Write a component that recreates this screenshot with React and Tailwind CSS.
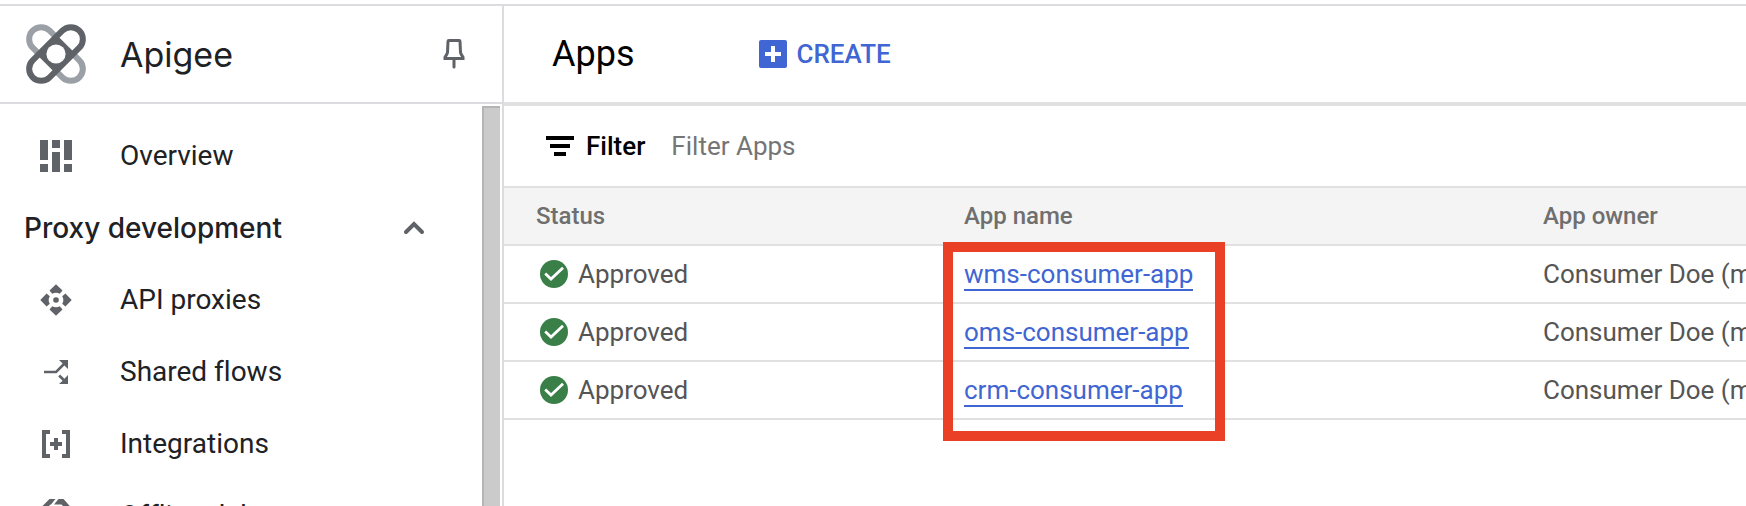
import React from "react";

function ApigeeLogo() {
  return (
    <svg className="size-[60px] shrink-0" viewBox="-30 -30 60 60" fill="none" aria-hidden="true">
      <rect x="-33" y="-12" width="66" height="24" rx="12" transform="rotate(45)" stroke="#9aa0a6" strokeWidth="6" />
      <g transform="rotate(-45)">
        <rect x="-33" y="-12" width="66" height="24" rx="12" fill="#fff" stroke="#5f6368" strokeWidth="6" />
        <rect x="-14" y="-14" width="28" height="28" fill="#5f6368" />
      </g>
      <circle r="9.6" fill="#fff" />
    </svg>
  );
}

function PinIcon() {
  return (
    <svg className="h-8 w-6" viewBox="0 0 24 32" fill="none" stroke="#5f6368" strokeWidth="3" aria-hidden="true">
      <path d="M6 3.2Q6 2.5 7 2.5H17Q18 2.5 18 3.2L18.5 14.5Q18.7 16 21 19.2V20.5H3V19.2Q5.3 16 5.5 14.5Z" />
      <path d="M12 21V29" strokeLinecap="round" />
    </svg>
  );
}

const icons = {
  overview: (
    <path d="M0 0h8v20H0zM0 24h8v8H0zM12 0h8v8h-8zM12 12h8v20h-8zM24 0h8v20h-8zM24 24h8v8h-8z" />
  ),
  proxies: (
    <>
      <path d="M16 .3 22.5 6.6 19.8 9.8A7.3 7.3 0 0 0 12.2 9.8L9.5 6.6Z" />
      <path d="M31.7 16 25.4 22.5 22.2 19.8A7.3 7.3 0 0 0 22.2 12.2L25.4 9.5Z" />
      <path d="M16 31.7 9.5 25.4 12.2 22.2A7.3 7.3 0 0 0 19.8 22.2L22.5 25.4Z" />
      <path d="M.3 16 6.6 9.5 9.8 12.2A7.3 7.3 0 0 0 9.8 19.8L6.6 22.5Z" />
      <circle cx="16" cy="16" r="2.8" />
    </>
  ),
  flows: (
    <>
      <path d="M4 14.7H15.5L22.6 7.6 19 4H28V13L24.4 9.4 16.6 17.3H4Z" />
      <path d="M18.2 20.5 20.1 18.6 24.4 22.8 28 19V28H19L22.6 24.7Z" />
    </>
  ),
  integrations: (
    <path d="M2 2h8v4H6v20h4v4H2zM30 2h-8v4h4v20h-4v4h8zM14 10h4v4h4v4h-4v4h-4v-4h-4v-4h4z" />
  ),
  offline: (
    <path d="M9.5 -1H15.5L11 4.5H10.5L4.5 10.5V14H0V8.5ZM18.5 -1H23.5L32 8.5V14H27.5V10.5L21.5 4.5H14ZM0 18H4.5V21.5L10.5 27.5H21.5L27.5 21.5V18H32V22.5L22.5 32H9.5L0 22.5Z" />
  ),
};

function NavItem({ icon, children }) {
  return (
    <a href="#" className="flex h-[72px] items-center gap-12 pl-10">
      <svg className="size-8 shrink-0 overflow-visible fill-[#5f6368]" viewBox="0 0 32 32" aria-hidden="true">
        {icons[icon]}
      </svg>
      {children}
    </a>
  );
}

function Sidebar() {
  return (
    <aside className="flex w-[504px] shrink-0 flex-col border-r-2 border-[#dadce0] text-[#202124]">
      <div className="flex h-[98px] shrink-0 items-center border-b-2 border-[#dadce0] pl-[26px] pr-9">
        <ApigeeLogo />
        <h1 className="ml-[34px] flex-1 font-[Inter,sans-serif] text-[34px]">Apigee</h1>
        <button type="button" aria-label="Pin menu">
          <PinIcon />
        </button>
      </div>
      <div className="flex min-h-0 flex-1 pr-0.5">
        <nav className="min-w-0 flex-1 pt-4 text-[28px] [font-variant-ligatures:none]">
          <NavItem icon="overview">Overview</NavItem>
          <button type="button" aria-expanded="true" className="flex h-[72px] w-full items-center justify-between pl-6 pr-14 font-[Inter,sans-serif] text-[28px] font-medium">
            Proxy development
            <svg className="h-4 w-6" viewBox="0 0 24 16" fill="none" stroke="#5f6368" strokeWidth="4" strokeLinecap="round" aria-hidden="true">
              <path d="M4 12 12 4 20 12" />
            </svg>
          </button>
          <NavItem icon="proxies">API proxies</NavItem>
          <NavItem icon="flows">Shared flows</NavItem>
          <NavItem icon="integrations">Integrations</NavItem>
          <NavItem icon="offline">Offline debug</NavItem>
        </nav>
        <div className="mt-0.5 w-[18px] border-l-2 border-t-2 border-[#b5b5b5] bg-[#cbcbcb]" />
      </div>
    </aside>
  );
}

function CheckIcon() {
  return (
    <svg className="size-7 shrink-0" viewBox="0 0 28 28" fill="none" aria-hidden="true">
      <circle cx="14" cy="14" r="14" fill="#3a7e48" />
      <path d="M5.2 13.4 11 19 23 7.8" stroke="#fff" strokeWidth="2.8" />
    </svg>
  );
}

const apps = ["wms-consumer-app", "oms-consumer-app", "crm-consumer-app"];

function AppsTable() {
  return (
    <table className="w-full table-fixed border-separate border-spacing-0 text-left text-[26px] leading-8 whitespace-nowrap text-[#555] [&_td]:border-b-2 [&_td]:border-[#e0e0e0] [&_th]:border-b-2 [&_th]:border-[#e0e0e0]">
      <colgroup>
        <col className="w-[428px]" />
        <col className="w-[579px]" />
        <col />
      </colgroup>
      <thead className="bg-[#f4f4f4] text-2xl text-[#6f6f6f]">
        <tr className="h-[58px]">
          <th className="pl-8 font-medium">Status</th>
          <th className="pl-8 font-medium">App name</th>
          <th className="pl-8 font-medium">App owner</th>
        </tr>
      </thead>
      <tbody>
        {apps.map((name) => (
          <tr key={name} className="h-[58px]">
            <td className="pl-9">
              <span className="flex items-center gap-2.5">
                <CheckIcon />
                Approved
              </span>
            </td>
            <td className="pl-8">
              <a href="#" className="inline-block border-b-2 border-[#3f66d2] leading-[30px] text-[#3f66d2]">
                {name}
              </a>
            </td>
            <td className="overflow-hidden pl-8">Consumer Doe (m</td>
          </tr>
        ))}
      </tbody>
    </table>
  );
}

export default function App() {
  return (
    <div className="flex h-screen flex-col overflow-hidden bg-white pt-1 font-[Roboto,sans-serif]">
      <div className="flex min-h-0 flex-1 border-t-2 border-[#dadce0]">
        <Sidebar />
        <main className="min-w-0 flex-1">
          <header className="flex h-[100px] items-center border-b-4 border-[#e0e0e0] pl-12 text-black">
            <h2 className="text-[36px]">Apps</h2>
            <button type="button" className="ml-[124px] flex items-center gap-2.5 text-[26px] font-medium text-[#3f66d2]">
              <svg className="size-7" viewBox="0 0 28 28" aria-hidden="true">
                <rect width="28" height="28" rx="2" fill="#3f66d2" />
                <path d="M12 6h4v6h6v4h-6v6h-4v-6H6v-4h6z" fill="#fff" />
              </svg>
              CREATE
            </button>
          </header>
          <div className="flex h-[82px] items-center border-b-2 border-[#e0e0e0] pl-[42px] text-[26px]">
            <svg className="h-5 w-7" viewBox="0 0 28 20" aria-hidden="true">
              <path d="M0 0h28v4H0zM4 8h20v4H4zM8 16h12v4H8z" />
            </svg>
            <label htmlFor="filter" className="ml-3 font-medium text-black">
              Filter
            </label>
            <input id="filter" type="text" placeholder="Filter Apps" className="ml-[26px] min-w-0 flex-1 outline-none placeholder:text-[#757575]" />
          </div>
          <div className="relative">
            <AppsTable />
            <div className="pointer-events-none absolute -bottom-[21px] left-[439px] top-[54px] w-[282px] border-10 border-[#ea4025]" />
          </div>
        </main>
      </div>
    </div>
  );
}
